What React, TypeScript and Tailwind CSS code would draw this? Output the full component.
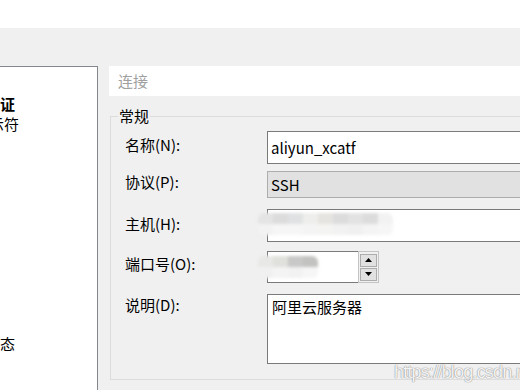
import React from "react";

function Mosaic({ top, bottom, w, h }: { top: string[]; bottom: string[]; w: number; h: number }) {
  return (
    <div className="flex flex-col blur-[1.5px] rounded-[6px] overflow-hidden">
      <div className="flex">
        {top.map((c, i) => (
          <div key={i} style={{ background: c, width: w, height: h }} />
        ))}
      </div>
      <div className="flex">
        {bottom.map((c, i) => (
          <div key={i} style={{ background: c, width: w, height: h }} />
        ))}
      </div>
    </div>
  );
}

export default function App() {
  return (
    <div className="relative w-[520px] h-[390px] overflow-hidden bg-[#f0f0f0] font-['Noto_Sans_CJK_SC',sans-serif] text-[15px] leading-[20px] text-black">
      <div className="h-[28px] bg-white" />
      <div className="flex mt-[38px] h-[324px]">
        {/* left tree panel */}
        <div className="w-[98px] shrink-0 bg-white border-t border-r border-[#828790] overflow-hidden pt-[27px] whitespace-nowrap">
          <div className="ml-[-45px] font-bold">身份验证</div>
          <div className="ml-[-26px]">提示符</div>
          <div className="ml-[-15px] mt-[200px]">状态</div>
        </div>

        {/* right side */}
        <div className="ml-[11px] flex-1 flex flex-col -mr-[30px]">
          <div className="h-[30px] bg-white flex items-center pl-[9px] text-[#a0a0a0]">连接</div>

          <div className="relative mt-[20px] ml-[1px] h-[264px] border border-[#dcdcdc] pt-[14px] pl-[14px]">
            <div className="absolute -top-[11px] left-[7px] px-[1px] bg-[#f0f0f0]">常规</div>

            {/* name */}
            <div className="flex">
              <div className="w-[142px] shrink-0 pt-[4px]">名称(N):</div>
              <div className="flex-1 h-[33px] bg-white border border-[#7a7a7a] flex items-center pl-[3px]">aliyun_xcatf</div>
            </div>

            {/* protocol */}
            <div className="flex mt-[7px]">
              <div className="w-[142px] shrink-0 pt-[1px]">协议(P):</div>
              <div className="flex-1 h-[27px] bg-[#e1e1e1] border border-[#adadad] flex items-center pl-[3px]">SSH</div>
            </div>

            {/* host */}
            <div className="relative flex mt-[11px]">
              <div className="w-[142px] shrink-0 pt-[5px]">主机(H):</div>
              <div className="flex-1 h-[33px] bg-white border border-[#7a7a7a]" />
              <div className="absolute left-[133px] top-[4px]">
                <Mosaic
                  w={15}
                  h={11}
                  top={["#e4e4e4", "#dcdcdc", "#e0e1e2", "#eeeeec", "#e6e4e0", "#dcdcdc", "#e2e2e2", "#dcdcdc", "#f2f2f2"]}
                  bottom={["#f2f2f2", "#f6f6f6", "#f6f6f6", "#f4f4f4", "#f4f4f2", "#f2f2f2", "#f0f0f0", "#f4f4f4", "#f6f6f6"]}
                />
              </div>
            </div>

            {/* port */}
            <div className="relative flex mt-[9px]">
              <div className="w-[142px] shrink-0 pt-[3px]">端口号(O):</div>
              <div className="flex">
                <div className="w-[91px] h-[32px] bg-white border-y border-l border-[#7a7a7a]" />
                <div className="w-[21px] h-[32px] border border-[#c4c4c4] bg-[#f0f0f0] flex flex-col items-center justify-center gap-[1px]">
                  <div className="w-[17px] h-[13px] bg-[#e1e1e1] border border-[#adadad] flex items-center justify-center">
                    <svg width="7" height="4" viewBox="0 0 7 4"><path d="M0 4 L3.5 0 L7 4 Z" fill="#000" /></svg>
                  </div>
                  <div className="w-[17px] h-[13px] bg-[#e1e1e1] border border-[#adadad] flex items-center justify-center">
                    <svg width="7" height="4" viewBox="0 0 7 4"><path d="M0 0 L3.5 4 L7 0 Z" fill="#000" /></svg>
                  </div>
                </div>
              </div>
              <div className="absolute left-[133px] top-[5px]">
                <Mosaic
                  w={15}
                  h={11}
                  top={["#e8e8e6", "#e0e0dc", "#c8c8c8", "#c2c2c0"]}
                  bottom={["#f0f0f0", "#f4f4f4", "#f2f2f2", "#f6f6f6"]}
                />
              </div>
            </div>

            {/* description */}
            <div className="flex mt-[11px]">
              <div className="w-[142px] shrink-0 pt-[1px]">说明(D):</div>
              <div className="flex-1 h-[70px] bg-white border border-[#7a7a7a] pl-[4px] pt-[2px]">阿里云服务器</div>
            </div>
          </div>
        </div>
      </div>

      <div className="absolute left-[394px] top-[360px] text-[18px] leading-[24px] tracking-[-0.8px] font-['Liberation_Sans',sans-serif] text-white/90 whitespace-nowrap [text-shadow:0_0_1px_#8a8a8a,0_0_1px_#8a8a8a]">
        https://blog.csdn.net
      </div>
    </div>
  );
}
